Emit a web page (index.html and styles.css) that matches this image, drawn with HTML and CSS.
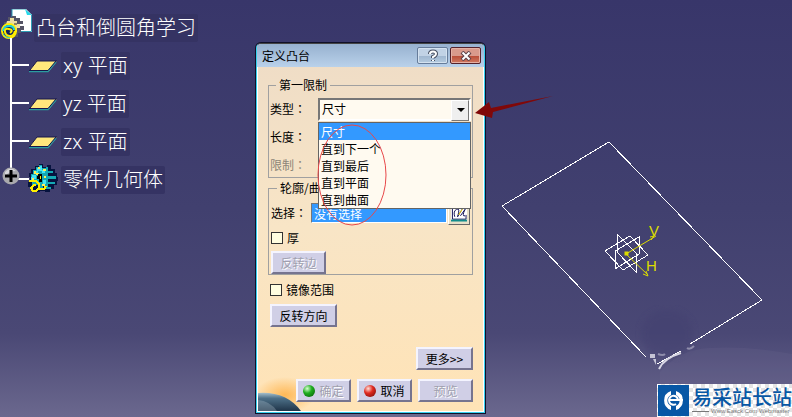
FILE: index.html
```html
<!DOCTYPE html>
<html lang="zh-CN">
<head>
  <meta charset="UTF-8" />
  <meta name="viewport" content="width=device-width, initial-scale=1" />
  <title>定义凸台</title>
  <link rel="stylesheet" href="styles.css">
</head>
<body>
  <svg width="0" height="0" class="defs">
    <symbol id="plane" viewBox="0 0 30 14">
      <path d="M9 2H29L21 12H1Z" fill="#ffe87c"/>
      <path d="M1 12.5H20L28 3" fill="none" stroke="#2b9ca0" stroke-width="1.5"/>
      <path d="M2 11L9 2H29M1 11.5H20L28 2" fill="none" stroke="#17164a"/>
    </symbol>
  </svg>

  <svg class="scene" width="792" height="417" viewBox="0 0 792 417">
    <defs>
      <filter id="soft"><feGaussianBlur stdDeviation="3"/></filter>
    </defs>
    <ellipse cx="667" cy="334" rx="26" ry="24" fill="#42406f" opacity=".5" filter="url(#soft)"/>
    <path d="M660 372Q680 349 710 348Q750 346 792 354V417H660Z" fill="#77749a" opacity=".15"/>
    <g fill="none" stroke="#fff" shape-rendering="crispEdges">
      <path d="M646 357L502 206L609 142L762 300L690 344M681 351L657 364"/>
      <path d="M617 234L636 253V272L617 252Z M605 251L630 236L648 255L623 270Z M615 251L639 237V254L615 269Z"/>
    </g>
    <path d="M659 369Q664 358 681 353" fill="none" stroke="#d8d7e4" stroke-width="2"/>
    <path d="M650 354h5v4h-5z M653 359l3 6v-6z" fill="#c5c4d5"/>
    <path d="M658 354q5 2 7 0M687 348q3 2 7-2" fill="none" stroke="#8f8dab" stroke-width="2"/>
    <g stroke="#dcdc00" fill="none">
      <path d="M626 254L656 236M650 237l4-1-3 4M626 254L648 275M643 274l5 2-2-5"/>
      <rect x="625" y="252" width="3" height="3" fill="#dcdc00"/>
    </g>
    <g class="axis">
      <text x="649" y="236">V</text>
      <text x="646" y="271">H</text>
    </g>
  </svg>

  <ul class="tree">
    <li class="root">
      <svg width="33" height="38" viewBox="0 0 33 38">
        <path d="M12 0H26L32 6V23H12Z" fill="#fff"/>
        <path d="M12 23V0H26M31.500 6V22.500H12" fill="none" stroke="#2f9db4"/>
        <path d="M25 0L32 6H27Z" fill="#27d9ea"/>
        <path d="M4 13H8V8H12V7H16V9H20V12H23V15H20V17H24V21H21V24H18V28H12V25H4Z" fill="#555466"/>
        <path d="M7 12H10V9H14V12H17V15H20V19H17V23H13V16H6Z" fill="#ecdca0"/>
        <path d="M14 14H17V16H14ZM10 15H13V18H10Z" fill="#8d8460"/>
        <circle cx="9" cy="22" r="7" fill="#14265f" stroke="#ffef00" stroke-width="2"/>
        <path d="M3 22Q4 17 9 17T14 21" fill="none" stroke="#20d0d8" stroke-width="2"/>
        <path d="M15 22Q14 27 10 27T5 23T9 20T10 24" fill="none" stroke="#ffef00" stroke-width="2"/>
        <path d="M3 25Q6 29 10 29" fill="none" stroke="#20d0d8"/>
      </svg>
      <span>凸台和倒圆角学习</span>
    </li>
    <li class="node"><svg width="30" height="14"><use href="#plane"/></svg><span>xy 平面</span></li>
    <li class="node"><svg width="30" height="14"><use href="#plane"/></svg><span>yz 平面</span></li>
    <li class="node"><svg width="30" height="14"><use href="#plane"/></svg><span>zx 平面</span></li>
    <li class="node last">
      <svg class="expand" width="18" height="18" viewBox="0 0 18 18">
        <circle cx="9" cy="9" r="8.500" fill="#a9a9ad"/>
        <path d="M3 5Q8-1 14 4Q8 4 3 9Z" fill="#d8d8dc"/>
        <path d="M9 3V15M3 9H15" stroke="#000" stroke-width="3"/>
      </svg>
      <svg width="30" height="38" viewBox="0 0 30 38" shape-rendering="crispEdges">
        <path d="M11 3H15V6H19V4H23V8H27V12H29V16H30V20H29V24H26V28H22V31H17V30H12V31H4V26H0V21H2V16H1V12H3V8H7V5H11Z" fill="#06133f"/>
        <path d="M11 4H14V7H18V6H20V10H25V12H20V15H28V18H20V21H27V23H20V26H23V28H18V25H15V29H12V24H4V19H3V13H5V9H8V6H11Z" fill="#14a9b4"/>
        <path d="M12 5H14V9H17V12H14V10H10V12H6V10H9V7H12ZM4 14H8V18H5V21H3V16H4ZM15 19H18V23H15Z" fill="#44e4f4"/>
        <path d="M10 6H12V8H10ZM15 8H18V10H15ZM6 10H8V13H6ZM16 15H18V17H16ZM8 12H11V14H8ZM4 17H6V19H4ZM14 23H17V25H14Z" fill="#ffef55"/>
        <path d="M10 13H14V21H11V18H9V15H10Z" fill="#000"/>
        <path d="M12 15H13V18H12Z" fill="#ffef00"/>
        <path d="M1 20H8L11 23V27L8 30H5L3 27L6 24H8M11 28H16L18 25" fill="none" stroke="#ffef00" stroke-width="2"/>
      </svg>
      <span>零件几何体</span>
    </li>
  </ul>

  <div class="dialog" role="dialog" aria-labelledby="dialog-title">
    <div class="title-bar">
      <h1 id="dialog-title">定义凸台</h1>
      <button class="win-btn" aria-label="帮助">
        <svg width="12" height="14" viewBox="0 0 12 14">
          <path d="M3 5Q3 2.500 6 2.500T9 5Q9 6.500 6 8V9M6 11V12" fill="none" stroke="#454e60" stroke-width="4"/>
          <path d="M3 5Q3 2.500 6 2.500T9 5Q9 6.500 6 8V9M6 11V12" fill="none" stroke="#fff" stroke-width="2"/>
        </svg>
      </button>
      <button class="win-btn close" aria-label="关闭">
        <svg width="12" height="10" viewBox="0 0 12 10">
          <path d="M2 1L10 9M10 1L2 9" stroke="#5a4148" stroke-width="4"/>
          <path d="M2.500 1.500L9.500 8.500M9.500 1.500L2.500 8.500" stroke="#fff" stroke-width="2"/>
        </svg>
      </button>
    </div>

    <form class="content">
      <fieldset class="limit">
        <legend>第一限制</legend>
        <div class="row">
          <label for="type" lang="zh-TW">类型：</label>
          <div class="combo">
            <select id="type">
              <option>尺寸</option>
              <option>直到下一个</option>
              <option>直到最后</option>
              <option>直到平面</option>
              <option>直到曲面</option>
            </select>
            <ul class="menu">
              <li class="selected">尺寸</li>
              <li>直到下一个</li>
              <li>直到最后</li>
              <li>直到平面</li>
              <li>直到曲面</li>
            </ul>
          </div>
        </div>
        <div class="row"><span lang="zh-TW">长度：</span></div>
        <div class="row disabled"><span lang="zh-TW">限制：</span></div>
      </fieldset>

      <fieldset class="profile">
        <legend>轮廓/曲面</legend>
        <div class="row">
          <label for="selection" lang="zh-TW">选择：</label>
          <input type="text" id="selection" value="没有选择" readonly>
          <button type="button" class="sketch" aria-label="草图">
            <svg width="17" height="17" viewBox="0 0 17 17">
              <path d="M0 0H17V15H0Z" fill="#fff"/>
              <path d="M1.500 1V14.500H16V10M4 12Q2 6 6 4T7 12L13 2M10 11L15 4Q11 12 15 11" fill="none" stroke="#0a0a50"/>
              <path d="M8 10L12 4" stroke="#ffe000"/>
              <path d="M0 16H17" stroke="#118c8c" stroke-width="2"/>
            </svg>
          </button>
        </div>
        <label class="check"><input type="checkbox">厚</label>
        <button type="button" class="btn side" disabled>反转边</button>
      </fieldset>

      <label class="check mirror"><input type="checkbox">镜像范围</label>
      <button type="button" class="btn reverse">反转方向</button>
      <button type="button" class="btn more">更多&gt;&gt;</button>

      <div class="actions">
        <button type="button" class="btn" disabled><i class="dot green"></i>确定</button>
        <button type="button" class="btn"><i class="dot red"></i>取消</button>
        <button type="button" class="btn" disabled>预览</button>
      </div>
    </form>

    <svg class="planet" width="58" height="36" viewBox="0 0 58 36">
      <defs>
        <radialGradient id="glow"><stop offset="0" stop-color="#ffae3e" stop-opacity=".8"/><stop offset="1" stop-color="#ffae3e" stop-opacity="0"/></radialGradient>
        <linearGradient id="globe" x1="0" y1="0" x2="0" y2="1"><stop offset="0" stop-color="#a5bfcc"/><stop offset=".3" stop-color="#4d7088"/><stop offset="1" stop-color="#1f3448"/></linearGradient>
      </defs>
      <ellipse cx="27" cy="20" rx="30" ry="18" fill="url(#glow)"/>
      <path d="M0 18Q28 16 43 36H0Z" fill="url(#globe)"/>
      <path d="M0 25Q12 26 19 36H0Z" fill="#b9cbd6" opacity=".3"/>
    </svg>
    <svg class="marks" width="310" height="190" viewBox="0 0 310 190">
      <ellipse cx="95" cy="131" rx="34" ry="50" fill="none" stroke="#e8484a"/>
      <path d="M218 69L232 58L234 64L296 52L236 68L235 74Z" fill="#800808"/>
    </svg>
  </div>

  <div class="watermark">
    <svg width="31" height="31" viewBox="0 0 31 31">
      <path d="M0 0H31V31H0Z" fill="#0757a5"/>
      <path d="M13 6A10 10 0 0 0 13 25V21A6 6 0 0 1 13 10ZM18 6A10 10 0 0 1 18 25V21A6 6 0 0 0 18 10Z" fill="#fff"/>
      <path d="M11 15H25M20 15A4.500 4.500 0 1 0 18 19" fill="none" stroke="#fff" stroke-width="2"/>
    </svg>
    <div>
      <strong>易采站长站</strong>
      <small>Www.Easck.Com Webmaster</small>
    </div>
  </div>
</body>
</html>
```
FILE: styles.css
```css
* {
  box-sizing: border-box;
}
body {
  position: relative;
  min-height: 100vh;
  margin: 0;
  padding: 9px 0;
  overflow: hidden;
  background: linear-gradient(#38366a 0%, #41406f 50%, #4a4875 80%, #6b688e 100%);
  color: #000;
  font-family: "Noto Sans CJK SC", sans-serif;
  font-size: 12px;
  line-height: 16px;
}
ul {
  margin: 0;
  padding: 0;
  list-style: none;
}
button, input, select {
  font: inherit;
  color: inherit;
}
.defs {
  position: absolute;
}
.scene {
  position: absolute;
  top: 0;
  left: 0;
}
.axis {
  fill: #dcdc00;
  font-family: "Liberation Sans", sans-serif;
  font-size: 15px;
}

/* specification tree */
.tree {
  color: #fff;
  font-family: "Noto Sans", "Noto Sans CJK SC", sans-serif;
  font-size: 20px;
  font-weight: 300;
  line-height: 28px;
}
.tree li {
  position: relative;
  display: flex;
  align-items: center;
  height: 38px;
}
.tree span {
  padding: 0 2px;
  border-radius: 2px;
  background: #353363;
}
.root {
  gap: 1px;
}
.node {
  gap: 3px;
  padding-left: 28px;
}
.node::before {
  content: "";
  position: absolute;
  top: -9px;
  left: 10px;
  width: 17px;
  height: 26px;
  border-left: 2px solid #fff;
  border-bottom: 2px solid #fff;
}
.node:not(.last)::after {
  content: "";
  position: absolute;
  top: 16px;
  left: 10px;
  bottom: 0;
  border-left: 2px solid #fff;
}
.expand {
  position: absolute;
  top: 6px;
  left: 2px;
}

/* pad definition window */
.dialog {
  position: absolute;
  top: 43px;
  left: 256px;
  width: 229px;
  border: 1px solid #35d0ee;
  border-top-color: #444;
  border-radius: 5px 5px 0 0;
  box-shadow: 0 0 0 1px #101028;
  background: linear-gradient(#eedcc6, #f8e5c6 50%, #ffe3b6);
}
.title-bar {
  display: flex;
  align-items: center;
  gap: 2px;
  height: 23px;
  padding: 0 3px 0 5px;
  border-radius: 4px 4px 0 0;
  background: linear-gradient(#97b1cf, #b9d1ea);
}
.title-bar h1 {
  flex: 1;
  margin: 0;
  font-size: 12px;
  font-weight: 400;
}
.win-btn {
  display: flex;
  align-items: center;
  justify-content: center;
  width: 31px;
  height: 17px;
  padding: 0;
  border: 1px solid #667c9a;
  border-radius: 2px;
  box-shadow: inset 0 0 0 1px #d4e2f0;
  background: linear-gradient(#c1d2e5 50%, #9eb5ce 50%, #b4cbe0);
}
.win-btn.close {
  border-color: #55222a;
  box-shadow: inset 0 0 0 1px #e5b0a4;
  background: linear-gradient(#d99a8c 50%, #b84a35 50%, #d07a62);
}
.content {
  display: flex;
  flex-direction: column;
  align-items: flex-start;
  padding: 10px 10px 9px;
  border: solid #fff;
  border-width: 0 1px 1px;
}
fieldset {
  display: flex;
  flex-direction: column;
  width: 100%;
  min-width: 0;
  margin: 0;
  border: 1px solid #a0a0a0;
}
legend {
  margin-left: 6px;
  padding: 0 3px;
}
.limit {
  gap: 4px;
  padding: 4px 1px 0;
}
.profile {
  gap: 5px;
  align-items: flex-start;
  margin-top: 2px;
  padding: 5px 2px 0;
}
.row {
  display: flex;
  align-items: center;
  width: 100%;
  height: 24px;
}
.row [lang] {
  font-family: "Noto Sans CJK TC", "Noto Sans CJK SC", sans-serif;
}
.limit label {
  width: 48px;
}
.profile .row label {
  width: 40px;
}
.disabled {
  color: #8c8577;
}
.combo {
  position: relative;
  flex: 1;
}
select {
  display: block;
  width: 100%;
  height: 23px;
  padding: 0 2px;
  border: 2px solid;
  border-color: #777 #fff #fff #777;
  border-radius: 0;
  appearance: none;
  background: #fffaf0;
  outline: none;
}
.combo::before {
  content: "";
  position: absolute;
  top: 2px;
  right: 2px;
  width: 16px;
  height: 19px;
  border: 1px solid;
  border-color: #fff #777 #777 #fff;
  background: #efefef;
}
.combo::after {
  content: "";
  position: absolute;
  top: 10px;
  right: 6px;
  border: 4px solid transparent;
  border-top-color: #000;
  border-bottom: 0;
}
.menu {
  position: absolute;
  z-index: 1;
  top: 24px;
  left: 0;
  right: 0;
  border: 1px solid #646464;
  background: #fffaf0;
  line-height: 17px;
}
.menu li {
  padding: 0 2px;
}
.menu .selected {
  background: #3399ff;
  color: #fff;
}
#selection {
  flex: 1;
  min-width: 0;
  height: 20px;
  padding: 0 2px;
  border: 1px solid;
  border-color: #777 #fff #fff #777;
  background: #3399ff;
  color: #fff;
}
.sketch {
  display: flex;
  width: 22px;
  height: 23px;
  margin-left: 1px;
  padding: 2px;
  border: 1px solid;
  border-color: #fff #666 #666 #fff;
  background: #e8e0c8;
}
.check {
  display: flex;
  align-items: center;
  gap: 4px;
}
.check input {
  width: 12px;
  height: 12px;
  margin: 0;
  border: 1px solid #333;
  appearance: none;
  background: #fffde0;
}
.mirror {
  margin: 7px 0 6px 2px;
}
.btn {
  display: flex;
  align-items: center;
  justify-content: center;
  gap: 4px;
  width: 55px;
  height: 23px;
  padding: 0;
  border: 2px solid;
  border-color: #f4f4ff #76748f #76748f #f4f4ff;
  background: #d0cfe6;
}
.btn:disabled {
  color: #a09fae;
  text-shadow: 1px 1px #fff;
}
.btn.reverse {
  width: 67px;
  margin-left: 2px;
}
.btn.more {
  width: 57px;
  margin-top: 20px;
  align-self: flex-end;
}
.actions {
  position: relative;
  z-index: 1;
  display: flex;
  gap: 6px;
  align-self: flex-end;
  margin-top: 9px;
}
.dot {
  width: 12px;
  height: 12px;
  border-radius: 50%;
}
.dot.green {
  background: radial-gradient(circle at 35% 30%, #d8ffd0, #1fae1f 40%, #045504);
}
.dot.red {
  background: radial-gradient(circle at 35% 30%, #ffe0d8, #e02a20 40%, #6d0808);
}
.planet {
  position: absolute;
  left: 1px;
  bottom: 1px;
  pointer-events: none;
}
.marks {
  position: absolute;
  z-index: 2;
  top: 0;
  left: 0;
  pointer-events: none;
}

.watermark {
  position: absolute;
  right: 0;
  bottom: 0;
  display: flex;
  align-items: center;
  gap: 3px;
  width: 135px;
  height: 33px;
  padding-left: 1px;
  background: repeating-conic-gradient(#e4e4e4 0 25%, #fff 0 50%) 0 0 / 8px 8px;
  white-space: nowrap;
}
.watermark svg {
  flex: none;
}
.watermark strong {
  display: block;
  color: #0757a5;
  font-size: 20px;
  font-weight: 500;
  line-height: 21px;
}
.watermark small {
  display: flex;
  align-items: center;
  gap: 2px;
  color: #777;
  font-family: "Liberation Sans", sans-serif;
  font-size: 6px;
  line-height: 9px;
}
.watermark small::before {
  content: "";
  width: 17px;
  border-top: 1px solid #777;
}
```
